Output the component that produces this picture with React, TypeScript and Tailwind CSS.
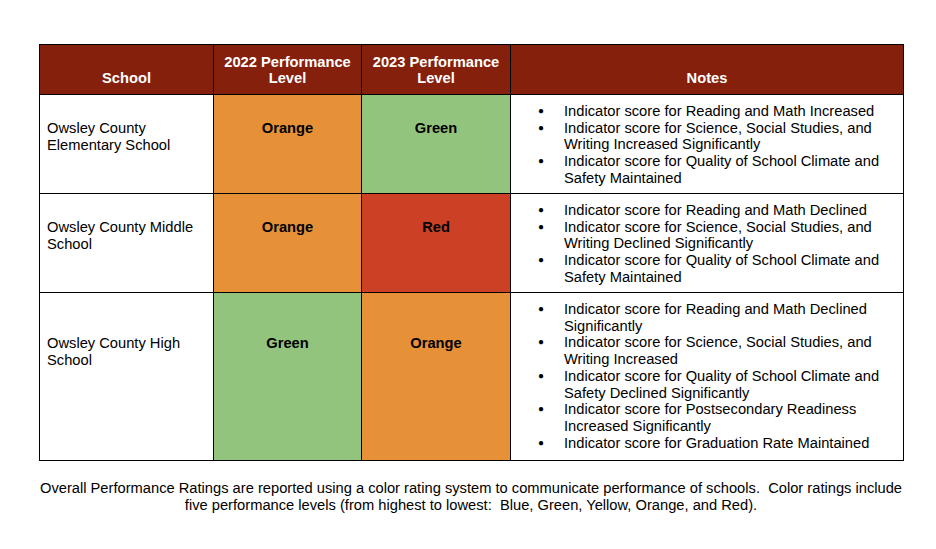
const rows = [
  {
    school: "Owsley County Elementary School",
    y2022: { label: "Orange", color: "bg-[#e69138]" },
    y2023: { label: "Green", color: "bg-[#93c47d]" },
    notes: [
      "Indicator score for Reading and Math Increased",
      "Indicator score for Science, Social Studies, and Writing Increased Significantly",
      "Indicator score for Quality of School Climate and Safety Maintained",
    ],
    height: "h-[99px]",
    pad: "pt-[25px]",
  },
  {
    school: "Owsley County Middle School",
    y2022: { label: "Orange", color: "bg-[#e69138]" },
    y2023: { label: "Red", color: "bg-[#cc4125]" },
    notes: [
      "Indicator score for Reading and Math Declined",
      "Indicator score for Science, Social Studies, and Writing Declined Significantly",
      "Indicator score for Quality of School Climate and Safety Maintained",
    ],
    height: "h-[99px]",
    pad: "pt-[25px]",
  },
  {
    school: "Owsley County High School",
    y2022: { label: "Green", color: "bg-[#93c47d]" },
    y2023: { label: "Orange", color: "bg-[#e69138]" },
    notes: [
      "Indicator score for Reading and Math Declined Significantly",
      "Indicator score for Science, Social Studies, and Writing Increased",
      "Indicator score for Quality of School Climate and Safety Declined Significantly",
      "Indicator score for Postsecondary Readiness Increased Significantly",
      "Indicator score for Graduation Rate Maintained",
    ],
    height: "h-[168px]",
    pad: "pt-[42px]",
  },
];

export default function App() {
  return (
    <div className="w-[936px] h-[549px] bg-white text-black font-['Liberation_Sans',Arial,sans-serif] text-[14.7px] leading-[16.7px]">
      <div className="pt-[44px] pl-[39px]">
        <table className="w-[864px] table-fixed border-collapse border border-black">
          <colgroup>
            <col className="w-[174px]" />
            <col className="w-[148px]" />
            <col className="w-[149px]" />
            <col className="w-[393px]" />
          </colgroup>
          <thead>
            <tr className="h-[50px] bg-[#85200c] text-white font-bold text-center">
              <th className="border border-black align-bottom pb-[7px]">School</th>
              <th className="border border-black border-l-white align-bottom pb-[7px]">2022 Performance Level</th>
              <th className="border border-black align-bottom pb-[7px]">2023 Performance Level</th>
              <th className="border border-black border-l-white align-bottom pb-[7px]">Notes</th>
            </tr>
          </thead>
          <tbody>
            {rows.map((r) => (
              <tr key={r.school} className={r.height}>
                <td className={`border border-black align-top pl-[7px] pr-[2px] ${r.pad}`}>{r.school}</td>
                <td className={`border border-black align-top text-center font-bold ${r.pad} ${r.y2022.color}`}>
                  {r.y2022.label}
                </td>
                <td className={`border border-black align-top text-center font-bold ${r.pad} ${r.y2023.color}`}>
                  {r.y2023.label}
                </td>
                <td className="border border-black align-top pt-[8px] pb-[6px] pl-[27px] pr-[10px]">
                  <ul>
                    {r.notes.map((n) => (
                      <li key={n} className="flex">
                        <span className="w-[26px] shrink-0 text-[10px] leading-[16.7px]">●</span>
                        <span>{n}</span>
                      </li>
                    ))}
                  </ul>
                </td>
              </tr>
            ))}
          </tbody>
        </table>
        <p className="w-[864px] mt-[19px] text-center">
          Overall Performance Ratings are reported using a color rating system to communicate performance of schools.&nbsp; Color ratings include five performance levels (from highest to lowest:&nbsp; Blue, Green, Yellow, Orange, and Red).
        </p>
      </div>
    </div>
  );
}
